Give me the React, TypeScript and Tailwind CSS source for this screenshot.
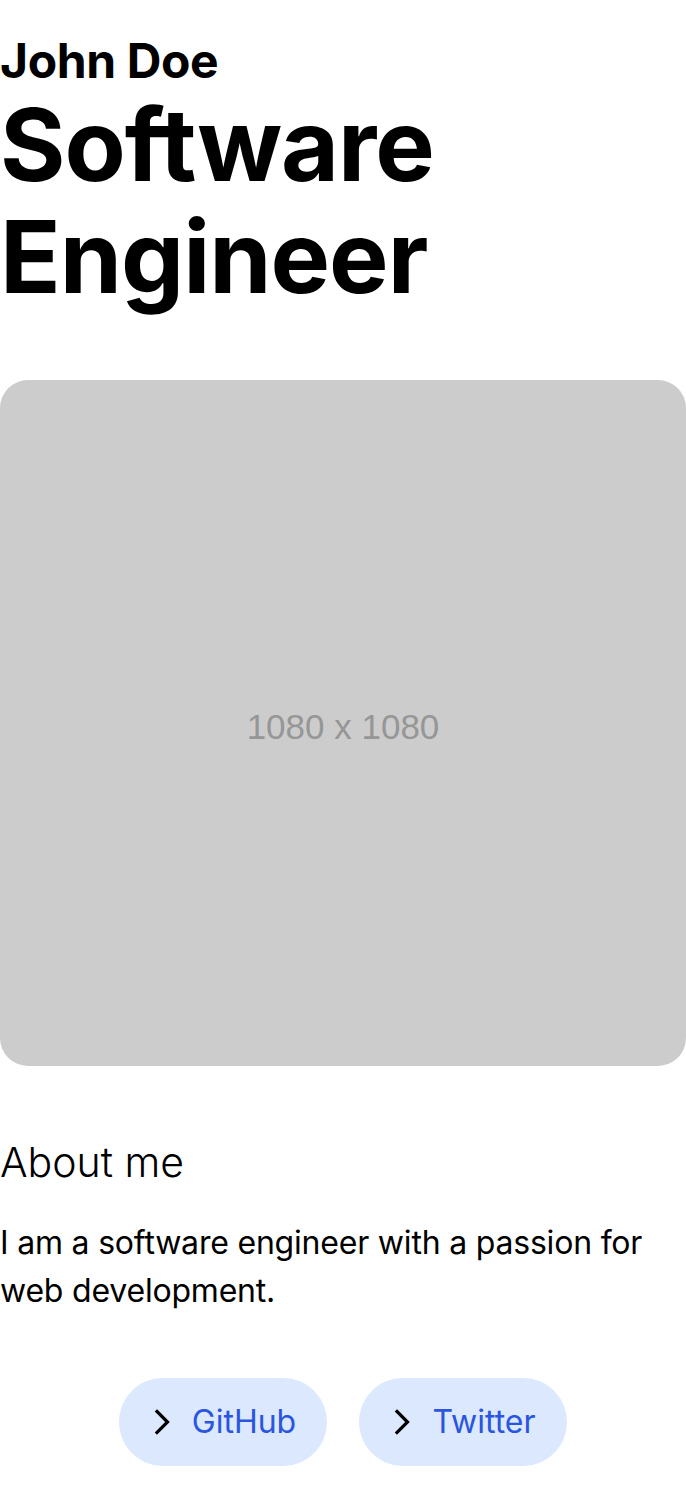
import React from 'react';

const links = [
  { label: 'GitHub', href: '#' },
  { label: 'Twitter', href: '#' },
];

const Chevron = () => (
  <svg width="16" height="28" viewBox="0 0 16 28" fill="none" stroke="currentColor" strokeWidth="3.2" strokeLinecap="square" strokeLinejoin="miter">
    <path d="M3 3.5 13.5 14 3 24.5" />
  </svg>
);

export default function App() {
  return (
    <div className="min-h-screen bg-white text-black font-['Inter',sans-serif]">
      <header className="pt-[33px]">
        <h2 className="text-[48px] font-bold leading-[56px] tracking-[-0.4px]">John Doe</h2>
        <h1 className="text-[100px] font-bold leading-[112px] tracking-[-1px]">
          Software Engineer
        </h1>
      </header>

      <div className="mt-[67px] w-full aspect-square rounded-[28px] bg-[#cccccc] flex items-center justify-center pt-2">
        <span className="font-['Liberation_Sans',Arial,sans-serif] text-[35px] text-[#969696]">1080 x 1080</span>
      </div>

      <section className="mt-[72px]">
        <h3 className="text-[41px] font-light leading-[48px]">About me</h3>
        <p className="mt-[33px] text-[32px] leading-[48px] tracking-[-0.2px]">
          I am a software engineer with a passion for web development.
        </p>
      </section>

      <nav className="mt-[63px] flex justify-center gap-8 pb-8">
        {links.map((l) => (
          <a
            key={l.label}
            href={l.href}
            className="h-[88px] w-[208px] rounded-full bg-[#dbe8fe] flex items-center justify-center gap-[22px] pl-1"
          >
            <Chevron />
            <span className="text-[32px] text-[#2a55e0]">{l.label}</span>
          </a>
        ))}
      </nav>
    </div>
  );
}
